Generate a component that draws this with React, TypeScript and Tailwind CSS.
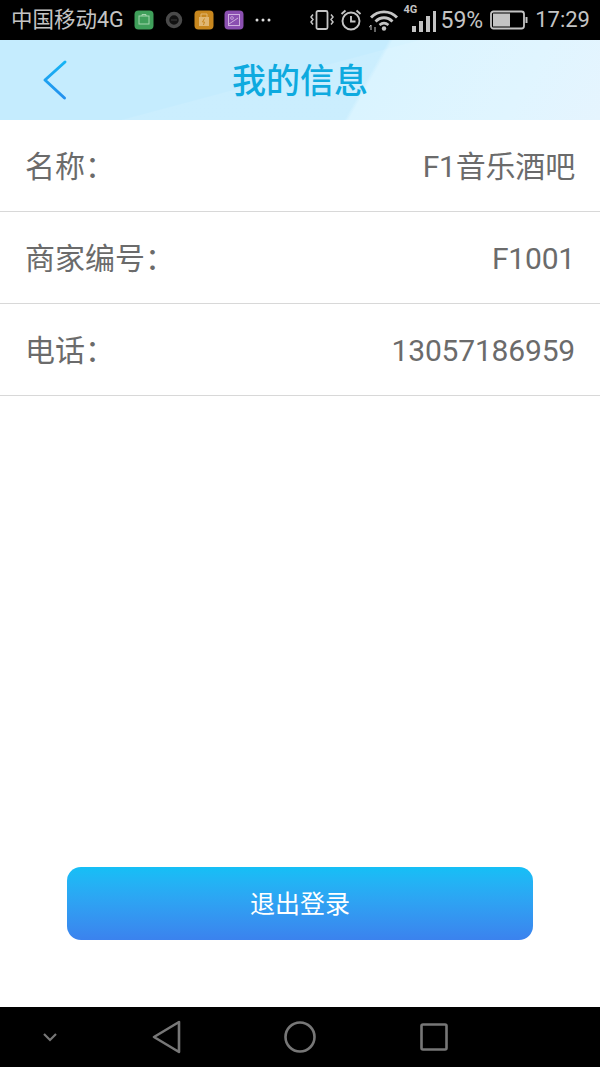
const font = "font-['Roboto','Noto_Sans_CJK_SC',sans-serif]";

function Row({ label, value }: { label: string; value: string }) {
  return (
    <div className="flex h-[92px] items-center justify-between border-b border-[#d8d8d8] px-[25px] pt-[2px] text-[30px] text-[#6b6b6b]">
      <span>{label}</span>
      <span className="tracking-[-0.18px]">{value}</span>
    </div>
  );
}

function NotifIcons() {
  return (
    <div className="ml-[10px] flex items-center">
      <svg width="20" height="20" viewBox="0 0 20 20">
        <rect width="19" height="19" x="0.5" y="0.5" rx="4" fill="#3f9f5a" />
        <rect x="5" y="6" width="10" height="8" fill="none" stroke="#a5d6ae" strokeWidth="1" />
        <path d="M8 6V4.500h4V6" fill="none" stroke="#a5d6ae" strokeWidth="1" />
      </svg>
      <svg className="ml-[10px]" width="20" height="20" viewBox="0 0 20 20">
        <circle cx="10" cy="10" r="6.500" fill="#111" stroke="#4a4a4a" strokeWidth="3.500" />
        <path d="M7.500 10h5" stroke="#666" strokeWidth="1" strokeDasharray="1 1" />
      </svg>
      <svg className="ml-[10px]" width="20" height="20" viewBox="0 0 20 20">
        <rect width="19" height="19" x="0.5" y="0.5" rx="4" fill="#c8871e" />
        <rect x="5" y="7" width="10" height="9" fill="#e0b774" />
        <path d="M7 7V4h6v3" fill="none" stroke="#e0b774" strokeWidth="1" />
        <path d="M10.500 8.500 8.500 12h2l-1 3" fill="none" stroke="#c8871e" strokeWidth="1" />
      </svg>
      <svg className="ml-[10px]" width="20" height="20" viewBox="0 0 20 20">
        <rect width="19" height="19" x="0.5" y="0.5" rx="4" fill="#8a4fb0" />
        <rect x="4.500" y="4.500" width="11" height="11" fill="none" stroke="#cfb0e0" strokeWidth="1" />
        <circle cx="8" cy="8" r="1.400" fill="none" stroke="#cfb0e0" strokeWidth="0.8" />
        <path d="m5 14 9-6" stroke="#cfb0e0" strokeWidth="1" />
      </svg>
      <svg className="ml-[11px]" width="16" height="20" viewBox="0 0 16 20">
        <circle cx="2" cy="10" r="1.500" fill="#ddd" />
        <circle cx="8" cy="10" r="1.500" fill="#ddd" />
        <circle cx="14" cy="10" r="1.500" fill="#ddd" />
      </svg>
    </div>
  );
}

function SystemIcons() {
  return (
    <div className="flex items-center text-[#c4c4c4]">
      <svg width="24" height="24" viewBox="0 0 24 24" fill="none" stroke="currentColor" strokeWidth="1.800">
        <rect x="6.500" y="3" width="11" height="18" rx="1.500" />
        <path d="M3 6.500 1 9l2 2.500L1 14l2 2.500M21 6.500 23 9l-2 2.500 2 2.500-2 2.500" strokeWidth="1.500" />
      </svg>
      <svg className="ml-[6px]" width="22" height="24" viewBox="0 0 22 24" fill="none" stroke="currentColor" strokeWidth="1.900">
        <circle cx="11" cy="13" r="8.500" />
        <path d="M11 8v5.500h4.500M1.500 6 5.500 2.500M20.500 6l-4-3.500" />
      </svg>
      <svg className="ml-[7px]" width="30" height="24" viewBox="0 0 30 24" fill="none" stroke="currentColor">
        <path d="M2 9.500C9 2 21 2 28 9.500" strokeWidth="2.800" />
        <path d="M6.500 13.500c5-5 12-5 17 0" strokeWidth="2.800" />
        <path d="M10.500 17c3-2.500 6-2.500 9 0" strokeWidth="2.500" />
        <circle cx="15" cy="20.500" r="2.200" fill="currentColor" stroke="none" />
        <path d="M2 17v5M0 19.500l2-2.500M6 19v5" strokeWidth="1" />
      </svg>
      <div className="relative ml-[13px] flex h-[24px] w-[24px] items-end gap-[3px]">
        <span className="absolute left-[-8px] top-[-4px] text-[11px] font-bold leading-[12px]">4G</span>
        <span className="block h-[6px] w-[4px] bg-current" />
        <span className="block h-[11px] w-[4px] bg-current" />
        <span className="block h-[16px] w-[4px] bg-current" />
        <span className="block h-[21px] w-[3px] bg-current" />
      </div>
    </div>
  );
}

export default function App() {
  return (
    <div className={`flex h-[1067px] w-[600px] flex-col overflow-hidden bg-white ${font}`}>
      <div className="flex h-[40px] shrink-0 items-center justify-between bg-black pl-[11px] pr-[10px] text-[#c4c4c4]">
        <div className="flex items-center">
          <span className="text-[21.500px] leading-none">中国移动4G</span>
          <NotifIcons />
        </div>
        <div className="flex items-center">
          <SystemIcons />
          <span className="ml-[5px] text-[23px] leading-none">59%</span>
          <svg className="ml-[7px]" width="38" height="20" viewBox="0 0 38 20">
            <rect x="1" y="1.500" width="33" height="17" rx="2.500" fill="none" stroke="#c4c4c4" strokeWidth="1.800" />
            <rect x="3" y="3.500" width="17" height="13" fill="#c4c4c4" />
            <rect x="35.500" y="7" width="2" height="6" fill="#c4c4c4" />
          </svg>
          <span className="ml-[7px] text-[22px] leading-none">17:29</span>
        </div>
      </div>

      <header className="relative flex h-[80px] shrink-0 items-center justify-center bg-[linear-gradient(165deg,transparent_46.5%,rgba(255,255,255,0.1)_47%),linear-gradient(119deg,#c5ecfe_0%,#c5ecfe_60.3%,#d6f3ff_61%,#ddf4ff_85%,#e2f3fe_100%)]">
        <button className="absolute left-[42px] top-[19px]" aria-label="返回">
          <svg width="26" height="42" viewBox="0 0 26 42" fill="none" strokeWidth="3" strokeLinecap="round" strokeLinejoin="round">
            <defs>
              <linearGradient id="back" x1="0" y1="0" x2="0" y2="1">
                <stop offset="0" stopColor="#17b4f4" />
                <stop offset="1" stopColor="#2490ee" />
              </linearGradient>
            </defs>
            <path d="M23 3 3 21l19.500 18" stroke="url(#back)" />
          </svg>
        </button>
        <h1 className="pt-[1px] text-[34px] font-medium leading-none text-[#0eaadf]">我的信息</h1>
      </header>

      <main className="flex flex-1 flex-col">
        <Row label="名称：" value="F1音乐酒吧" />
        <Row label="商家编号：" value="F1001" />
        <Row label="电话：" value="13057186959" />
        <div className="mt-auto mb-[67px] flex justify-center">
          <button className="h-[73px] w-[466px] rounded-[14px] bg-gradient-to-b from-[#15bff6] to-[#3b82ee] pt-[3px] text-[25px] text-white">
            退出登录
          </button>
        </div>
      </main>

      <nav className="flex h-[60px] shrink-0 items-center bg-black">
        <svg className="ml-[40px]" width="20" height="20" viewBox="0 0 20 20" fill="none" stroke="#777" strokeWidth="2.200">
          <path d="m4 7 6 6 6-6" />
        </svg>
        <svg className="ml-[91px]" width="32" height="36" viewBox="0 0 32 36" fill="none" stroke="#777" strokeWidth="2.600" strokeLinejoin="round">
          <path d="M28 3v30L3 18z" />
        </svg>
        <svg className="ml-[100px]" width="34" height="34" viewBox="0 0 34 34" fill="none" stroke="#777" strokeWidth="2.600">
          <circle cx="17" cy="17" r="14.500" />
        </svg>
        <svg className="ml-[102px]" width="30" height="30" viewBox="0 0 30 30" fill="none" stroke="#777" strokeWidth="2.600">
          <rect x="2.500" y="2.500" width="25" height="25" rx="1.500" />
        </svg>
      </nav>
    </div>
  );
}
